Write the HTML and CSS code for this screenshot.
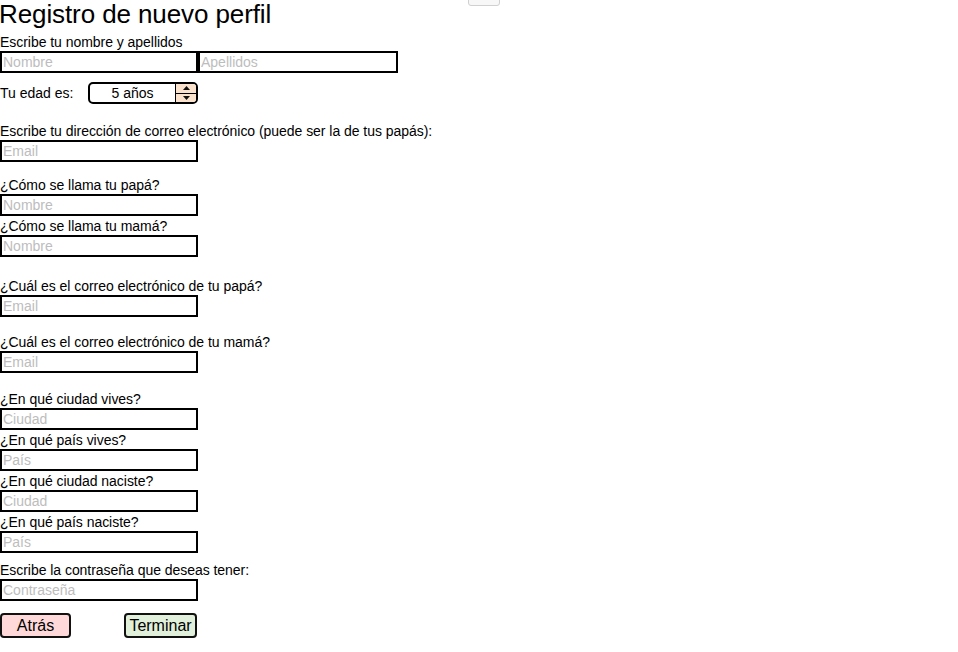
FILE: index.html
```html
<!DOCTYPE html>
<html lang="es">
<head>
<meta charset="utf-8">
<title>Registro de nuevo perfil</title>
<link rel="stylesheet" href="styles.css">
</head>
<body>
<div class="top-btn"></div>
<div class="page">
  <h1 class="title">Registro de nuevo perfil</h1>

  <div class="field mt6">
    <label class="lbl">Escribe tu nombre y apellidos</label>
    <div class="pair">
      <input class="inp inp-first" placeholder="Nombre">
      <input class="inp inp-last" placeholder="Apellidos">
    </div>
  </div>

  <div class="age-row">
    <span class="age-label">Tu edad es:</span>
    <div class="spinner">
      <span class="spin-value">5 años</span>
      <div class="spin-btns">
        <div class="spin-up"><svg width="7" height="4" viewBox="0 0 7 4"><path d="M0 4 L3.5 0 L7 4 Z" fill="#111"/></svg></div>
        <div class="spin-down"><svg width="7" height="4" viewBox="0 0 7 4"><path d="M0 0 L3.5 4 L7 0 Z" fill="#111"/></svg></div>
      </div>
    </div>
  </div>

  <div class="field mt19">
    <label class="lbl">Escribe tu dirección de correo electrónico (puede ser la de tus papás):</label>
    <input class="inp" placeholder="Email">
  </div>

  <div class="field mt15">
    <label class="lbl">¿Cómo se llama tu papá?</label>
    <input class="inp" placeholder="Nombre">
  </div>
  <div class="field mt2">
    <label class="lbl">¿Cómo se llama tu mamá?</label>
    <input class="inp" placeholder="Nombre">
  </div>

  <div class="field mt21">
    <label class="lbl">¿Cuál es el correo electrónico de tu papá?</label>
    <input class="inp" placeholder="Email">
  </div>

  <div class="field mt17">
    <label class="lbl">¿Cuál es el correo electrónico de tu mamá?</label>
    <input class="inp" placeholder="Email">
  </div>

  <div class="field mt18">
    <label class="lbl">¿En qué ciudad vives?</label>
    <input class="inp" placeholder="Ciudad">
  </div>
  <div class="field mt2">
    <label class="lbl">¿En qué país vives?</label>
    <input class="inp" placeholder="País">
  </div>
  <div class="field mt2">
    <label class="lbl">¿En qué ciudad naciste?</label>
    <input class="inp" placeholder="Ciudad">
  </div>
  <div class="field mt2">
    <label class="lbl">¿En qué país naciste?</label>
    <input class="inp" placeholder="País">
  </div>

  <div class="field mt9">
    <label class="lbl">Escribe la contraseña que deseas tener:</label>
    <input class="inp" type="password" placeholder="Contraseña">
  </div>

  <div class="actions">
    <button class="btn btn-back">Atrás</button>
    <button class="btn btn-finish">Terminar</button>
  </div>
</div>
</body>
</html>
```

FILE: styles.css
```css
html, body {
  margin: 0;
  padding: 0;
  background: #fff;
}
body {
  font-family: "Liberation Sans", Arial, sans-serif;
  font-size: 14px;
  color: #000;
}
.top-btn {
  position: absolute;
  left: 468px;
  top: -20px;
  width: 30px;
  height: 24px;
  border: 1px solid #d0d0d0;
  border-radius: 3px;
  background: #f7f7f7;
}
.page {
  display: flex;
  flex-direction: column;
  align-items: flex-start;
}
.title {
  margin: 0 0 0 -1px;
  font-size: 26px;
  font-weight: normal;
  line-height: 28px;
  letter-spacing: -0.1px;
}
.field {
  display: flex;
  flex-direction: column;
  align-items: flex-start;
  gap: 1px;
}
.lbl {
  font-size: 14px;
  line-height: 16px;
  letter-spacing: -0.04px;
}
.pair {
  display: flex;
}
.inp {
  box-sizing: border-box;
  width: 198px;
  height: 22px;
  margin: 0;
  padding: 0 0 0 1px;
  border: 2px solid #000;
  border-radius: 0;
  background: #fff;
  font-family: "Liberation Sans", Arial, sans-serif;
  font-size: 14px;
  outline: none;
}
.inp::placeholder {
  color: #bdbdbd;
}
.inp-first {
  width: 198px;
}
.inp-last {
  width: 200px;
}
.mt2 { margin-top: 2px; }
.mt6 { margin-top: 6px; }
.mt9 { margin-top: 9px; }
.mt15 { margin-top: 15px; }
.mt17 { margin-top: 17px; }
.mt18 { margin-top: 18px; }
.mt19 { margin-top: 19px; }
.mt21 { margin-top: 21px; }

.age-row {
  margin-top: 9px;
  display: flex;
  align-items: center;
  height: 22px;
}
.age-label {
  width: 88px;
  line-height: 16px;
}
.spinner {
  box-sizing: border-box;
  width: 110px;
  height: 22px;
  border: 2px solid #000;
  border-radius: 5px;
  display: flex;
  overflow: hidden;
}
.spin-value {
  flex: 1;
  text-align: center;
  line-height: 18px;
}
.spin-btns {
  width: 20px;
  border-left: 1px solid #000;
  background: #fbe2cc;
  display: flex;
  flex-direction: column;
}
.spin-up, .spin-down {
  flex: 1;
  display: flex;
  align-items: center;
  justify-content: center;
}
.spin-up {
  border-bottom: 1px solid #000;
}
.spin-up svg, .spin-down svg {
  display: block;
}

.actions {
  margin-top: 12px;
  display: flex;
  gap: 53px;
}
.btn {
  box-sizing: border-box;
  height: 25px;
  margin: 0;
  padding: 0;
  border: 2px solid #111;
  border-radius: 4px;
  font-family: "Liberation Sans", Arial, sans-serif;
  font-size: 16px;
  color: #000;
  line-height: 20px;
}
.btn-back {
  width: 71px;
  background: #ffd9d9;
}
.btn-finish {
  width: 73px;
  background: #e1f0da;
}
```
